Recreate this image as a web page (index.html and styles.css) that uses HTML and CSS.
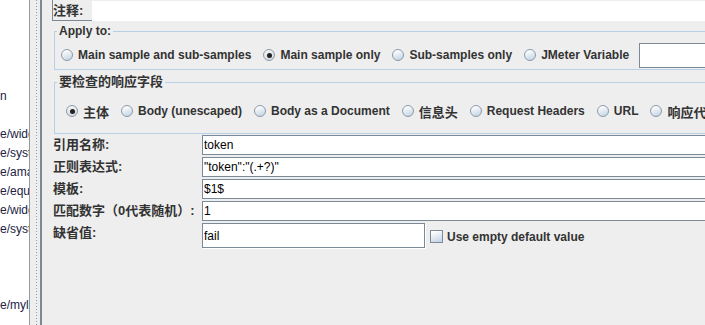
FILE: index.html
```html
<!DOCTYPE html>
<html lang="zh">
<head>
    <meta charset="UTF-8">
    <title>正则表达式提取器</title>
    <link rel="stylesheet" href="styles.css">
</head>
<body>
    <div class="tree">
        <div class="tree-row">n</div>
        <div class="tree-row"></div>
        <div class="tree-row">e/widg</div>
        <div class="tree-row">e/syst</div>
        <div class="tree-row">e/ama</div>
        <div class="tree-row">e/equi</div>
        <div class="tree-row">e/widg</div>
        <div class="tree-row">e/syst</div>
        <div class="tree-row"></div>
        <div class="tree-row"></div>
        <div class="tree-row"></div>
        <div class="tree-row">e/mylr</div>
    </div>

    <div class="splitter"><div class="grip"></div></div>

    <div class="main">
        <div class="comment-row">
            <span class="field-label zh">注释:</span>
            <input type="text" class="comment-input">
        </div>

        <fieldset class="group apply-group">
            <legend>Apply to:</legend>
            <div class="radio-row">
                <label class="radio"><span class="mark"></span>Main sample and sub-samples</label>
                <label class="radio"><span class="mark on"></span>Main sample only</label>
                <label class="radio"><span class="mark"></span>Sub-samples only</label>
                <label class="radio"><span class="mark"></span>JMeter Variable</label>
                <input type="text" class="var-input">
            </div>
        </fieldset>

        <fieldset class="group field-group">
            <legend class="zh">要检查的响应字段</legend>
            <div class="radio-row">
                <label class="radio"><span class="mark on"></span><span class="zh">主体</span></label>
                <label class="radio"><span class="mark"></span>Body (unescaped)</label>
                <label class="radio"><span class="mark"></span>Body as a Document</label>
                <label class="radio"><span class="mark"></span><span class="zh">信息头</span></label>
                <label class="radio"><span class="mark"></span>Request Headers</label>
                <label class="radio"><span class="mark"></span>URL</label>
                <label class="radio"><span class="mark"></span><span class="zh">响应代</span></label>
            </div>
        </fieldset>

        <div class="form">
            <span class="field-label zh">引用名称:</span>
            <input type="text" class="text-input" value="token">

            <span class="field-label zh">正则表达式:</span>
            <input type="text" class="text-input" value='"token":"(.+?)"'>

            <span class="field-label zh">模板:</span>
            <input type="text" class="text-input" value="$1$">

            <span class="field-label zh">匹配数字（0代表随机）:</span>
            <input type="text" class="text-input" value="1">

            <span class="field-label zh">缺省值:</span>
            <div class="default-cell">
                <input type="text" class="text-input short" value="fail">
                <label class="check"><span class="box"></span>Use empty default value</label>
            </div>
        </div>
    </div>
</body>
</html>
```

FILE: styles.css
```css
body {
    margin: 0;
    width: 705px;
    height: 325px;
    overflow: hidden;
    display: flex;
    background: #eeeeee;
    color: #333333;
    font-family: "Liberation Sans", Arial, "Noto Sans CJK SC", sans-serif;
    font-size: 12px;
}
.zh {
    font-family: "Liberation Sans", "Noto Sans CJK SC", sans-serif;
    font-size: 13px;
}

/* left tree, mostly hidden behind the split */
.tree {
    flex: none;
    width: 29px;
    background: #ffffff;
    border-right: 1px solid #8f9aa5;
    overflow: hidden;
    padding-top: 87px;
    white-space: nowrap;
    color: #222244;
}
.tree-row {
    height: 19px;
    line-height: 19px;
}
.splitter {
    flex: none;
    width: 10px;
    border-right: 2px solid #7a8a99;
}
.grip {
    width: 1px;
    height: 100%;
    margin-left: 6px;
    background: repeating-linear-gradient(#9a9a9a 0 1px, transparent 1px 3px);
}

.main {
    flex: none;
    width: 700px;
    padding-left: 10px;
}

.comment-row {
    display: flex;
    align-items: center;
    height: 20px;
    border-left: 1px solid #7a8a99;
    border-bottom: 1px solid #7a8a99;
}
.comment-row .field-label {
    width: 39px;
    padding-top: 1px;
}
.comment-input {
    flex: 1;
    height: 18px;
    margin-top: 1px;
    border: none;
    background: #ffffff;
    outline: none;
}

.field-label {
    font-weight: bold;
    line-height: 20px;
    white-space: nowrap;
}

/* titled groups */
.group {
    margin: 0 0 0 2px;
    border: 1px solid #b8cfe5;
    min-width: 0;
}
.group legend {
    font-weight: bold;
    padding: 0 2px;
}
.apply-group {
    margin-top: 3px;
    padding: 4px 0 1px 6px;
}
.apply-group legend {
    line-height: 14px;
    margin-left: -4px;
}
.field-group {
    margin-top: 4px;
    padding: 11px 0 12px 11px;
}
.field-group legend {
    line-height: 16px;
    margin-left: -9px;
}

.radio-row {
    display: flex;
    align-items: center;
    white-space: nowrap;
}
.apply-group .radio-row {
    height: 26px;
}
.field-group .radio-row {
    height: 20px;
}
.radio {
    display: inline-flex;
    align-items: center;
    gap: 5px;
    margin-right: 12px;
    font-weight: bold;
}
.mark {
    width: 12px;
    height: 12px;
    box-sizing: border-box;
    border: 1px solid #8c9aa8;
    border-radius: 50%;
    background: linear-gradient(160deg, #ffffff 10%, #c6d6e6 90%);
    display: flex;
    align-items: center;
    justify-content: center;
}
.mark.on {
    background: linear-gradient(160deg, #f4f4f4 10%, #d4d8dc 90%);
}
.mark.on::after {
    content: "";
    width: 5px;
    height: 5px;
    border-radius: 50%;
    background: #222222;
}
.var-input {
    flex: none;
    width: 120px;
    height: 25px;
    margin-left: -2px;
    box-sizing: border-box;
    border: 1px solid #7a8a99;
    background: #ffffff;
}

/* label / field grid */
.form {
    display: grid;
    grid-template-columns: 149px 1fr;
    grid-template-rows: 20px 20px 20px 20px 25px;
    row-gap: 2px;
    margin-top: 1px;
    padding-left: 1px;
}
.form .field-label {
    align-self: start;
}
.text-input {
    height: 20px;
    box-sizing: border-box;
    border: 1px solid #7a8a99;
    border-right: none;
    padding: 0 1px;
    margin: 0;
    background: #ffffff;
    color: #000000;
    font-family: "Liberation Sans", Arial, sans-serif;
    font-size: 12px;
    outline: none;
}
.default-cell {
    display: flex;
    align-items: center;
}
.text-input.short {
    width: 223px;
    height: 25px;
    border-right: 1px solid #7a8a99;
    box-shadow: 1px 1px 0 #ffffff;
}
.check {
    display: inline-flex;
    align-items: center;
    gap: 4px;
    margin-left: 5px;
    margin-top: 2px;
    font-weight: bold;
}
.box {
    width: 13px;
    height: 13px;
    box-sizing: border-box;
    border: 1px solid #7a8a99;
    background: linear-gradient(160deg, #ffffff 10%, #c6d6e6 90%);
}
```
